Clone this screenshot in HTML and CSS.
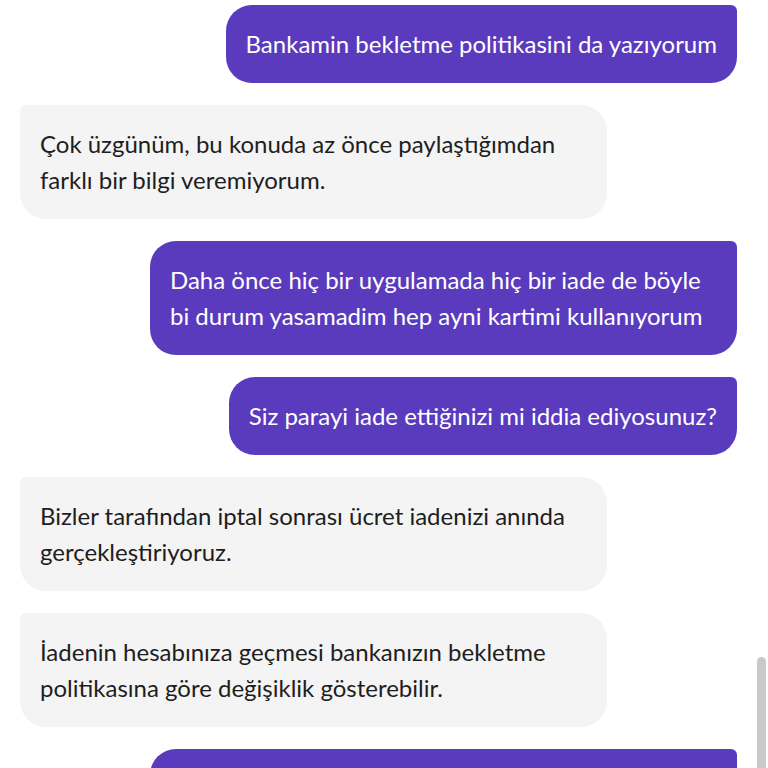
FILE: index.html
```html
<!DOCTYPE html>
<html lang="tr">
<head>
<meta charset="utf-8">
<link rel="stylesheet" href="styles.css">
</head>
<body>
<div class="chat">
  <div class="msg user">Bankamin bekletme politikasini da yazıyorum</div>
  <div class="msg bot">Çok üzgünüm, bu konuda az önce paylaştığımdan farklı bir bilgi veremiyorum.</div>
  <div class="msg user">Daha önce hiç bir uygulamada hiç bir iade de böyle bi durum yasamadim hep ayni kartimi kullanıyorum</div>
  <div class="msg user">Siz parayi iade ettiğinizi mi iddia ediyosunuz?</div>
  <div class="msg bot">Bizler tarafından iptal sonrası ücret iadenizi anında gerçekleştiriyoruz.</div>
  <div class="msg bot">İadenin hesabınıza geçmesi bankanızın bekletme politikasına göre değişiklik gösterebilir.</div>
  <div class="msg user pending"></div>
</div>
<div class="scrollbar"></div>
</body>
</html>
```

FILE: styles.css
```css
html, body {
  margin: 0;
  padding: 0;
  background: #ffffff;
  overflow: hidden;
  height: 768px;
}
.chat {
  display: flex;
  flex-direction: column;
  gap: 22px;
  padding: 5px 31px 0 20px;
  font-family: "Lato", "Noto Sans", sans-serif;
  font-size: 24px;
  line-height: 36px;
}
.msg {
  max-width: 547px;
  padding: 21px 20px;
  box-sizing: content-box;
  border-radius: 26px;
}
.user {
  align-self: flex-end;
  background: #5a3bbd;
  color: #ffffff;
  border-top-right-radius: 6px;
}
.bot {
  align-self: flex-start;
  background: #f4f4f4;
  color: #1e1e1e;
  border-top-left-radius: 6px;
}
.pending {
  width: 547px;
  height: 72px;
}
.scrollbar {
  position: fixed;
  right: 2px;
  top: 657px;
  width: 9px;
  height: 120px;
  background: #c9c9c9;
  border-radius: 5px 5px 0 0;
}
```
